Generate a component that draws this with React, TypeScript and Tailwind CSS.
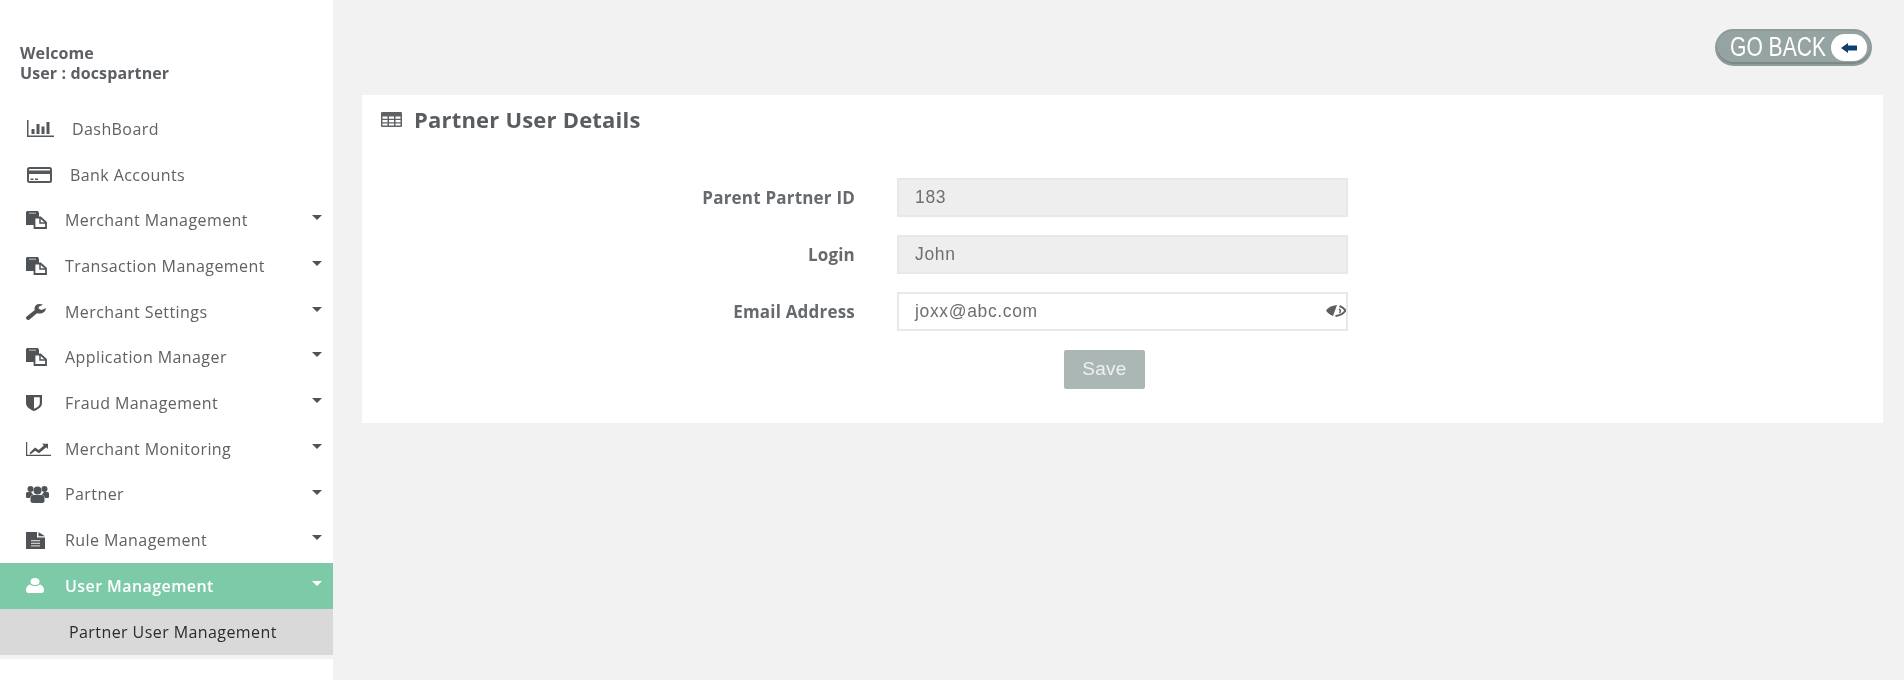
import type { ReactNode } from 'react';

const DARK = '#505356';

function BarsIcon() {
  return (
    <svg width="27" height="17" viewBox="0 0 27 17" fill="#55585b">
      <path d="M0 0h1.500v15.500H27V17H0z" />
      <path d="M4.500 9H7.500V14H4.500zM9.500 4H12.500V14H9.500zM14.500 6.500H17.500V14H14.500zM19.500 2H22.500V14H19.500z" />
    </svg>
  );
}

function CardIcon() {
  return (
    <svg width="25" height="16" viewBox="0 0 25 16">
      <rect x="1" y="1" width="23" height="14" rx="1.500" fill="white" stroke="#55585b" strokeWidth="2" />
      <path d="M1 3.500h23v3.500H1zM3.500 11.500h3v1.500h-3zM8 11.500h3v1.500H8z" fill="#55585b" />
    </svg>
  );
}

function PasteIcon() {
  return (
    <svg width="21" height="18" viewBox="0 0 21 18">
      <path d="M1 0h11l1 2v12H0V1z" fill={DARK} />
      <path d="M3 1.500h7v1.500H3z" fill="#9a9c9e" />
      <path d="M8.500 6.500h6l5.500 5v5.500H8.500z" fill="white" stroke={DARK} strokeWidth="1.800" />
      <path d="M14 6.500v5.500h6" fill="none" stroke={DARK} strokeWidth="1.500" />
    </svg>
  );
}

function WrenchIcon() {
  return (
    <svg width="20" height="16" viewBox="0 0 20 16" fill={DARK}>
      <path d="M13.500 0C10.500 0 8.500 2 8.500 4.500c0 .6.100 1 .3 1.500L0.700 12.500C-.3 13.300-.2 14.500.6 15.300c.8.800 2 .9 2.900.1L11 9.200c.8.300 1.600.4 2.500.4 3.300 0 6-2 6.500-5.100l-.3-.3-4.200 1.900-2.800-1.400V2.700L17 .7C16 .2 14.800 0 13.500 0z" />
    </svg>
  );
}

function ShieldIcon() {
  return (
    <svg width="16" height="16" viewBox="0 0 16 16">
      <path d="M0 0h16v8c0 4-4 6.500-8 8-4-1.500-8-4-8-8z" fill={DARK} />
      <path d="M8 2.200h5.800v5.800c0 2.800-2.900 4.600-5.800 5.800z" fill="white" />
    </svg>
  );
}

function LineChartIcon() {
  return (
    <svg width="25" height="14" viewBox="0 0 25 14" fill={DARK}>
      <path d="M0 0h1.200v12.800H25V14H0z" />
      <path d="M3.500 11l5.500-5.500 3.800 2.500 5-4.500-1.800-1.800H22V7l-1.700-1.800-7.300 6-3.800-2.500-4.700 3.500z" />
    </svg>
  );
}

function UsersIcon() {
  return (
    <svg width="23" height="17" viewBox="0 0 23 17" fill={DARK}>
      <circle cx="4.500" cy="3" r="3" />
      <circle cx="18.500" cy="3" r="3" />
      <circle cx="11.500" cy="4.500" r="4" />
      <path d="M0 7.500c0-1 1-1.500 2-1.500h3c.6 1 1.300 1.800 2.300 2.500-2 .8-3 2-3.300 3.500H1.500C.5 12 0 11.500 0 10.500zM23 7.500c0-1-1-1.500-2-1.500h-3c-.6 1-1.300 1.800-2.300 2.500 2 .8 3 2 3.300 3.500h2.500c1 0 1.500-.5 1.500-1.500z" />
      <path d="M7.500 9h8c2 0 3 1.500 3 3.500v2.500c0 1.200-1 2-2.500 2H7c-1.500 0-2.500-.8-2.500-2v-2.500C4.500 10.500 5.500 9 7.500 9z" />
    </svg>
  );
}

function FileIcon() {
  return (
    <svg width="19" height="17" viewBox="0 0 19 17" fill={DARK}>
      <path d="M0 0h11v5.500h8V17H0z" />
      <path d="M12.500 0 19 4.200h-6.500z" />
      <path d="M5 8h9v1.300H5zM5 10.700h9V12H5zM5 13.300h9v1.300H5z" fill="#c9cacb" />
    </svg>
  );
}

function UserIcon() {
  return (
    <svg width="18" height="15" viewBox="0 0 18 15" fill="white">
      <ellipse cx="9" cy="3.500" rx="4.500" ry="3.500" />
      <path d="M4 6.500c1.200 1 3 1.500 5 1.500s3.800-.5 5-1.500c2.300.4 4 2.800 4 5.500 0 1.800-1 3-2.500 3h-13C1 15 0 13.800 0 12c0-2.700 1.700-5.100 4-5.500z" />
    </svg>
  );
}

function TableIcon() {
  return (
    <svg width="21" height="15" viewBox="0 0 21 15">
      <rect width="21" height="15" rx="1" fill="#5f6366" />
      <path d="M1.500 4.500h5v2.300h-5zM8 4.500h5v2.300H8zM14.500 4.500h5v2.300h-5zM1.500 8h5v2.300h-5zM8 8h5v2.300H8zM14.500 8h5v2.300h-5zM1.500 11.500h5v2h-5zM8 11.500h5v2H8zM14.500 11.500h5v2h-5z" fill="white" />
    </svg>
  );
}

function EyeSlashIcon() {
  return (
    <svg width="20" height="13" viewBox="0 0 20 13" className="absolute right-[0px] top-[10px]">
      <path d="M0 6.500C2 3.500 5.500 1.500 11 1L7 12C4 11 1.500 9 0 6.500z" fill="#5f5f5f" />
      <path d="M13.500 2C16 2.800 18 4.500 19.500 6.500 17.500 9.500 14 11.500 9.500 12" fill="none" stroke="#5f5f5f" strokeWidth="2" />
      <path d="M13 5c1.500.8 2 2.500 .5 4" fill="none" stroke="#5f5f5f" strokeWidth="1.500" />
    </svg>
  );
}

const menuItems: { label: string; icon: ReactNode }[] = [
  { label: 'Merchant Management', icon: <PasteIcon /> },
  { label: 'Transaction Management', icon: <PasteIcon /> },
  { label: 'Merchant Settings', icon: <WrenchIcon /> },
  { label: 'Application Manager', icon: <PasteIcon /> },
  { label: 'Fraud Management', icon: <ShieldIcon /> },
  { label: 'Merchant Monitoring', icon: <LineChartIcon /> },
  { label: 'Partner', icon: <UsersIcon /> },
  { label: 'Rule Management', icon: <FileIcon /> },
];

function Caret({ color = DARK }: { color?: string }) {
  return (
    <svg width="10" height="5" viewBox="0 0 10 5" className="absolute right-[11px] top-[18px]">
      <path d="M0 0h10L5 5z" fill={color} />
    </svg>
  );
}

function Sidebar() {
  return (
    <aside className="w-[333px] shrink-0 bg-white pt-[43px] text-[#5f6163]">
      <div className="h-[62px] pl-[20px] text-[16px] leading-[20px] font-bold tracking-[0.12px] text-[#5b5e62]">
        <div>Welcome</div>
        <div>User : docspartner</div>
      </div>

      <nav className="pt-[1px] text-[16px] tracking-[0.42px]">
        <a className="flex h-[45.7px] items-center pl-[27px]">
          <BarsIcon />
          <span className="ml-[18px]">DashBoard</span>
        </a>
        <a className="flex h-[45.7px] items-center pl-[27px]">
          <CardIcon />
          <span className="ml-[18px]">Bank Accounts</span>
        </a>
        {menuItems.map((item) => (
          <a key={item.label} className="relative flex h-[45.7px] items-center">
            <span className="flex w-[65px] pl-[26px]">{item.icon}</span>
            <span>{item.label}</span>
            <Caret />
          </a>
        ))}
        <a className="relative flex h-[46px] items-center bg-[#7dcaa9] font-semibold text-white">
          <span className="flex w-[65px] pl-[26px]">
            <UserIcon />
          </span>
          <span>User Management</span>
          <Caret color="white" />
        </a>
        <a className="flex h-[46px] items-center bg-[#d9d9d9] pl-[69px] text-[#2b2b2b]">
          Partner User Management
        </a>
        <div className="h-[4px] bg-[#f2f2f2]" />
      </nav>
    </aside>
  );
}

function Field({ label, value, disabled, icon }: { label: string; value: string; disabled?: boolean; icon?: ReactNode }) {
  return (
    <div className="flex h-[39px] items-center">
      <label className="w-[493px] text-right text-[17px] font-bold tracking-[0.2px] text-[#666a6e]">{label}</label>
      <div
        className={`relative ml-[42px] flex h-[39px] w-[451px] items-center border-2 border-[#e8e8e8] pl-[16px] font-['Liberation_Sans',Arial,sans-serif] text-[17.5px] tracking-[0.65px] text-[#6f6f6f] ${
          disabled ? 'bg-[#eeeeee]' : 'bg-white'
        }`}
      >
        {value}
        {icon}
      </div>
    </div>
  );
}

function GoBack() {
  return (
    <div className="flex h-[95px] items-start justify-end pt-[29px] pr-[32px]">
      <a className="flex h-[37px] w-[157px] items-center rounded-full border-2 border-[#8f9b9b] bg-[#96a3a3] pl-[13px] shadow-[inset_0_-2px_0_#7d8888]">
        <span className="w-[100px] shrink-0 origin-left scale-x-[0.78] font-['Liberation_Sans',Arial,sans-serif] text-[27px] leading-none whitespace-nowrap text-white">
          GO BACK
        </span>
        <span className="ml-[1px] flex h-[27px] w-[36px] shrink-0 items-center justify-center rounded-full bg-white">
          <svg width="16" height="10" viewBox="0 0 16 10">
            <path d="M0 5 7 0v2.500h9v5H7V10z" fill="#0f3f73" />
          </svg>
        </span>
      </a>
    </div>
  );
}

export default function App() {
  return (
    <div className="flex h-[680px] overflow-hidden bg-[#f2f2f2] font-['Open_Sans',sans-serif] blur-[0.4px]">
      <Sidebar />
      <main className="flex-1">
        <GoBack />
        <section className="ml-[29px] h-[328px] w-[1521px] bg-white">
          <h2 className="flex h-[48px] items-center pl-[19px] text-[22px] font-bold tracking-[0.2px] text-[#5a5d60]">
            <TableIcon />
            <span className="ml-[12px]">Partner User Details</span>
          </h2>
          <div className="mt-[35px] flex flex-col gap-[18px]">
            <Field label="Parent Partner ID" value="183" disabled />
            <Field label="Login" value="John" disabled />
            <Field label="Email Address" value="joxx@abc.com" icon={<EyeSlashIcon />} />
          </div>
          <button className="mt-[19px] ml-[702px] h-[39px] w-[81px] rounded-[2px] bg-[#abb7b5] font-['Liberation_Sans',Arial,sans-serif] text-[19px] tracking-[0.3px] text-[#eef1f0]">
            Save
          </button>
        </section>
      </main>
    </div>
  );
}
